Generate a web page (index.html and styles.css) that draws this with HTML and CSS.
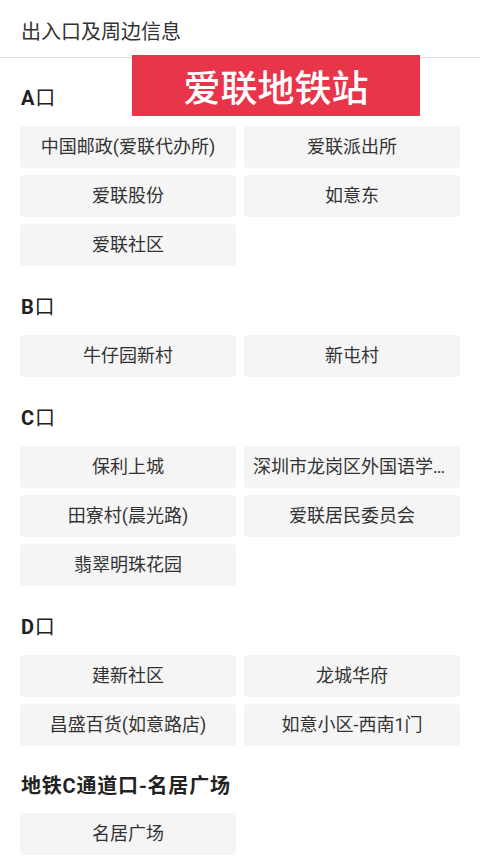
FILE: index.html
```html
<!DOCTYPE html>
<html lang="zh-CN">
<head>
<meta charset="utf-8">
<title>出入口及周边信息</title>
<link rel="stylesheet" href="styles.css">
</head>
<body>
<div class="page">
  <header class="topbar">出入口及周边信息</header>
  <div class="banner">爱联地铁站</div>
  <main class="content">
    <section class="group">
      <h2 class="group-title">A<span class="kou">口</span></h2>
      <div class="grid">
        <div class="item">中国邮政(爱联代办所)</div>
        <div class="item">爱联派出所</div>
        <div class="item">爱联股份</div>
        <div class="item">如意东</div>
        <div class="item">爱联社区</div>
      </div>
    </section>
    <section class="group">
      <h2 class="group-title">B<span class="kou">口</span></h2>
      <div class="grid">
        <div class="item">牛仔园新村</div>
        <div class="item">新屯村</div>
      </div>
    </section>
    <section class="group">
      <h2 class="group-title">C<span class="kou">口</span></h2>
      <div class="grid">
        <div class="item">保利上城</div>
        <div class="item">深圳市龙岗区外国语学校(爱联校区)</div>
        <div class="item">田寮村(晨光路)</div>
        <div class="item">爱联居民委员会</div>
        <div class="item">翡翠明珠花园</div>
      </div>
    </section>
    <section class="group">
      <h2 class="group-title">D<span class="kou">口</span></h2>
      <div class="grid">
        <div class="item">建新社区</div>
        <div class="item">龙城华府</div>
        <div class="item">昌盛百货(如意路店)</div>
        <div class="item">如意小区-西南1门</div>
      </div>
    </section>
    <section class="group group-last">
      <h2 class="group-title">地铁C通道口-名居广场</h2>
      <div class="grid">
        <div class="item">名居广场</div>
      </div>
    </section>
  </main>
</div>
</body>
</html>
```
FILE: styles.css
```css
* { box-sizing: border-box; }
html, body {
  margin: 0;
  padding: 0;
  background: #ffffff;
}
body {
  font-family: Roboto, "Noto Sans CJK SC", sans-serif;
  color: #333333;
}
.page {
  position: relative;
  width: 480px;
  min-height: 867px;
  overflow: hidden;
}
.topbar {
  height: 58px;
  padding-left: 21px;
  padding-top: 4px;
  display: flex;
  align-items: center;
  font-size: 20px;
  color: #333333;
  border-bottom: 1px solid #dcdcdc;
}
.banner {
  position: absolute;
  left: 132px;
  top: 55px;
  width: 288px;
  height: 61px;
  background: #e8354a;
  color: #ffffff;
  font-size: 37px;
  font-weight: 500;
  display: flex;
  align-items: center;
  justify-content: center;
}
.content {
  padding: 0 20px;
}
.group {
  padding-top: 29px;
}
.group:first-child {
  padding-top: 28px;
}
.group-last {
  padding-top: 28px;
}
.group-title {
  margin: 0 0 15px 1px;
  font-size: 20px;
  line-height: 25px;
  font-weight: 700;
  letter-spacing: 0.8px;
  color: #222222;
}
.group-last .group-title {
  margin-bottom: 14px;
}
.kou {
  font-weight: 400;
}
.grid {
  display: grid;
  grid-template-columns: 1fr 1fr;
  column-gap: 8px;
  row-gap: 7px;
}
.item {
  height: 42px;
  line-height: 42px;
  background: #f5f5f5;
  border-radius: 4px;
  padding: 0 9px;
  font-size: 18px;
  color: #333333;
  text-align: center;
  white-space: nowrap;
  overflow: hidden;
  text-overflow: ellipsis;
}
```
